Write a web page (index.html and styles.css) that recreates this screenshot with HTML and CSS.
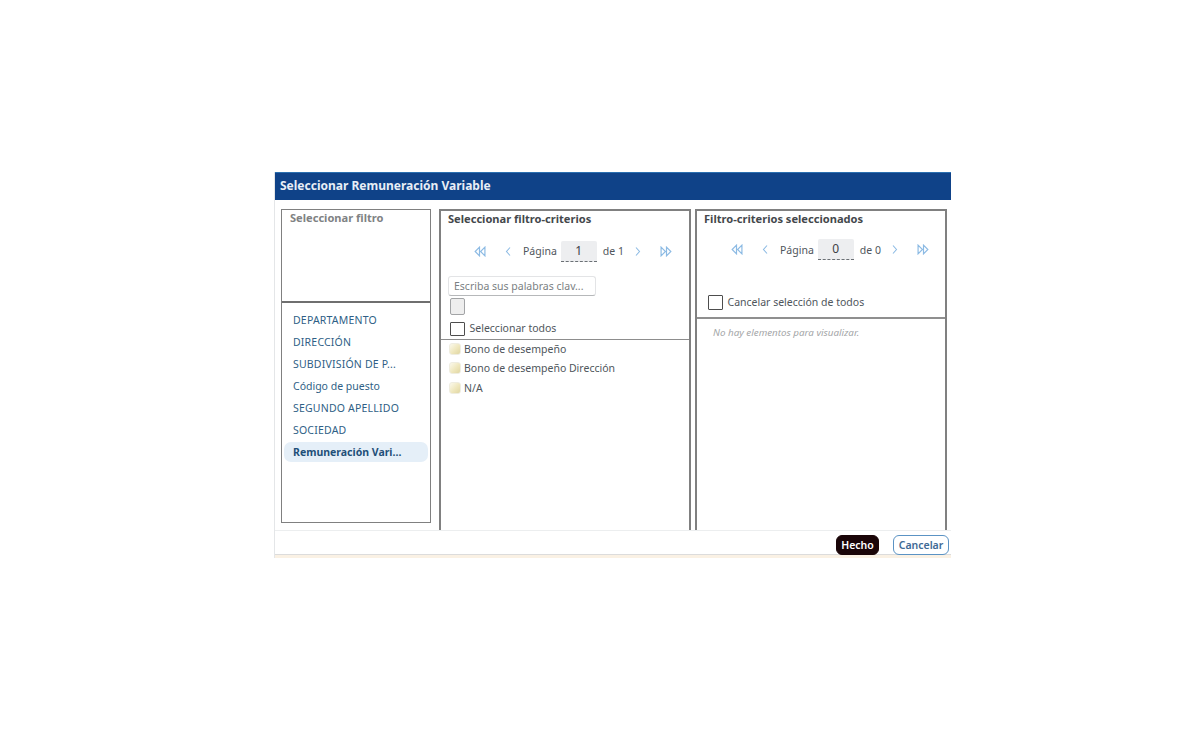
FILE: index.html
```html
<!DOCTYPE html>
<html lang="es">
<head>
  <meta charset="UTF-8" />
  <title>Seleccionar Remuneración Variable</title>
  <link rel="stylesheet" href="styles.css">
</head>
<body>
  <div class="dialog">
    <div class="dialog-title">Seleccionar Remuneración Variable</div>
    <div class="dialog-body">
      <div class="panel panel-left">
        <div class="left-top">
          <div class="panel-title muted">Seleccionar filtro</div>
        </div>
        <ul class="filter-list">
          <li class="caps">DEPARTAMENTO</li>
          <li class="caps">DIRECCIÓN</li>
          <li class="caps">SUBDIVISIÓN DE P...</li>
          <li>Código de puesto</li>
          <li class="caps">SEGUNDO APELLIDO</li>
          <li class="caps">SOCIEDAD</li>
          <li class="active">Remuneración Vari...</li>
        </ul>
      </div>

      <div class="panel panel-mid">
        <div class="mid-top">
          <div class="panel-title">Seleccionar filtro-criterios</div>
          <div class="pager">
            <svg class="ic ic-first" viewBox="0 0 12 10"><path d="M6 1 2 5l4 4zM11 1 7 5l4 4z"/></svg>
            <svg class="ic ic-prev" viewBox="0 0 6 10"><path d="M5 1 1.500 5 5 9"/></svg>
            <span class="pager-label">Página</span>
            <span class="pager-input">1</span>
            <span class="pager-of">de 1</span>
            <svg class="ic ic-next" viewBox="0 0 6 10"><path d="M1 1l3.500 4L1 9"/></svg>
            <svg class="ic ic-last" viewBox="0 0 12 10"><path d="M1 1l4 4-4 4zM6 1l4 4-4 4z"/></svg>
          </div>
          <div class="search">Escriba sus palabras clav...</div>
          <div class="grey-box"></div>
          <div class="check-row">
            <span class="check"></span>
            <span class="check-label">Seleccionar todos</span>
          </div>
        </div>
        <ul class="criteria-list">
          <li><span class="folder"></span>Bono de desempeño</li>
          <li><span class="folder"></span>Bono de desempeño Dirección</li>
          <li><span class="folder"></span>N/A</li>
        </ul>
      </div>

      <div class="panel panel-right">
        <div class="right-top">
          <div class="panel-title">Filtro-criterios seleccionados</div>
          <div class="pager pager-right">
            <svg class="ic ic-first" viewBox="0 0 12 10"><path d="M6 1 2 5l4 4zM11 1 7 5l4 4z"/></svg>
            <svg class="ic ic-prev" viewBox="0 0 6 10"><path d="M5 1 1.500 5 5 9"/></svg>
            <span class="pager-label">Página</span>
            <span class="pager-input">0</span>
            <span class="pager-of">de 0</span>
            <svg class="ic ic-next" viewBox="0 0 6 10"><path d="M1 1l3.500 4L1 9"/></svg>
            <svg class="ic ic-last" viewBox="0 0 12 10"><path d="M1 1l4 4-4 4zM6 1l4 4-4 4z"/></svg>
          </div>
          <div class="check-row check-row-right">
            <span class="check"></span>
            <span class="check-label">Cancelar selección de todos</span>
          </div>
        </div>
        <div class="empty">No hay elementos para visualizar.</div>
      </div>
    </div>
    <div class="dialog-footer">
      <button class="btn btn-done">Hecho</button>
      <button class="btn btn-cancel">Cancelar</button>
    </div>
    <div class="dialog-strip"></div>
  </div>
</body>
</html>
```

FILE: styles.css
```css
body {
  margin: 0;
  padding: 172px 0 0 274px;
  background: #fff;
  font-family: "Noto Sans", "Open Sans", sans-serif;
  font-size: 10.5px;
  color: #4f565c;
}
ul {
  list-style: none;
  margin: 0;
  padding: 0;
}
.dialog {
  width: 677px;
  border-left: 1px solid #e4e6e8;
  box-sizing: border-box;
}
.dialog-title {
  height: 28px;
  box-sizing: border-box;
  border-top: 1px solid #2a6fb0;
  background: #0f4288;
  color: #e8eef6;
  font-size: 12px;
  font-weight: 700;
  line-height: 26px;
  padding-left: 5px;
}
.dialog-body {
  display: flex;
  align-items: flex-start;
  padding: 9px 3px 0 6px;
  height: 330px;
  box-sizing: border-box;
}
.panel {
  box-sizing: border-box;
  border: 2px solid #808080;
  background: #fff;
}
.panel-left {
  width: 150px;
  height: 314px;
  margin-right: 8px;
  border-width: 1.500px;
}
.panel-mid, .panel-right {
  width: 252px;
  height: 321px;
  border-bottom: 0;
}
.panel-mid {
  margin-right: 4px;
}
.panel-title {
  font-size: 11.100px;
  font-weight: 700;
  line-height: 16px;
  color: #44484c;
}
.panel-title.muted {
  color: #808284;
}
.left-top {
  height: 91px;
  padding: 0 0 0 8px;
  border-bottom: 2px solid #6f6f6f;
  box-sizing: content-box;
}
.filter-list {
  padding: 7px 2px 0 2px;
  color: #2f5f86;
}
.filter-list li {
  height: 20px;
  line-height: 20px;
  margin-bottom: 2px;
  padding-left: 9px;
  white-space: nowrap;
}
.filter-list li.caps {
  letter-spacing: .2px;
}
.filter-list li.active {
  background: #e5eff8;
  border-radius: 7px;
  font-weight: 700;
  color: #1f5078;
}
.mid-top {
  height: 129px;
  padding: 0 0 0 7px;
  border-bottom: 1px solid #8d8d8d;
  box-sizing: border-box;
}
.pager {
  display: flex;
  align-items: center;
  height: 22px;
  margin-top: 13px;
  padding-left: 25px;
}
.pager-right {
  margin-top: 11.500px;
  padding-left: 26px;
}
.ic {
  height: 11px;
  fill: none;
  stroke: #8dbbe4;
  stroke-width: 1.100;
  flex: none;
}
.ic-first, .ic-last {
  width: 13px;
}
.ic-prev, .ic-next {
  width: 6px;
}
.ic-prev {
  margin-left: 19px;
}
.pager-label {
  margin-left: 12px;
}
.pager-input {
  width: 36px;
  height: 20px;
  margin-left: 4px;
  background: #edeef0;
  border-bottom: 1px dashed #6b7075;
  border-radius: 2px 2px 0 0;
  text-align: center;
  font-size: 12px;
  line-height: 20px;
  color: #3c4045;
}
.pager-of {
  margin-left: 6px;
}
.ic-next {
  margin-left: 11px;
}
.ic-last {
  margin-left: 19px;
}
.search {
  width: 141px;
  height: 18px;
  margin-top: 14px;
  border: 1px solid #e3e4e6;
  border-bottom-color: #b6b8ba;
  border-radius: 3px;
  padding-left: 5px;
  line-height: 18px;
  color: #7b7f83;
}
.grey-box {
  width: 13px;
  height: 15px;
  margin: 2px 0 0 2px;
  border: 1px solid #a2a4a6;
  border-radius: 2px;
  background: #eeeeee;
}
.check-row {
  display: flex;
  align-items: center;
  gap: 5px;
  height: 16px;
  margin-top: 6px;
  margin-left: 2px;
}
.check {
  width: 12.500px;
  height: 12.500px;
  border: 1.500px solid #4d4d4d;
  border-radius: 1px;
  flex: none;
}
.check-label {
  margin-bottom: 2px;
}
.check-row-right {
  margin-top: 34px;
  margin-left: 4px;
}
.criteria-list {
  margin-top: -1px;
}
.criteria-list li {
  display: flex;
  align-items: center;
  gap: 3px;
  height: 19.500px;
  padding-left: 8px;
  white-space: nowrap;
}
.folder {
  width: 12px;
  height: 12px;
  border-radius: 3px;
  background: linear-gradient(135deg, #fbf9ec, #efe7bd 55%, #e0d6a2);
  border: 1px solid #efede0;
  box-sizing: border-box;
  flex: none;
}
.right-top {
  height: 108px;
  padding: 0 0 0 7px;
  border-bottom: 2px solid #8f8f8f;
  box-sizing: border-box;
}
.empty {
  padding: 7px 0 0 16px;
  font-size: 9.800px;
  font-style: italic;
  color: #a4a6a8;
}
.dialog-footer {
  display: flex;
  justify-content: flex-end;
  align-items: flex-end;
  gap: 14px;
  height: 25px;
  padding-right: 2px;
  border-top: 1px solid #eceeef;
  border-bottom: 1px solid #dcdcdc;
  box-sizing: border-box;
}
.btn {
  height: 20px;
  padding: 0;
  border-radius: 6px;
  font-family: inherit;
  font-size: 10.500px;
  font-weight: 600;
  box-sizing: border-box;
  margin-bottom: -1px;
}
.btn-done {
  width: 43px;
  background: #1a0508;
  border: 1px solid #1a0508;
  color: #fff;
}
.btn-cancel {
  width: 56px;
  background: #fff;
  border: 1px solid #5b93c4;
  color: #3e6a95;
}
.dialog-strip {
  height: 3px;
  background: #faf1e4;
}
```
